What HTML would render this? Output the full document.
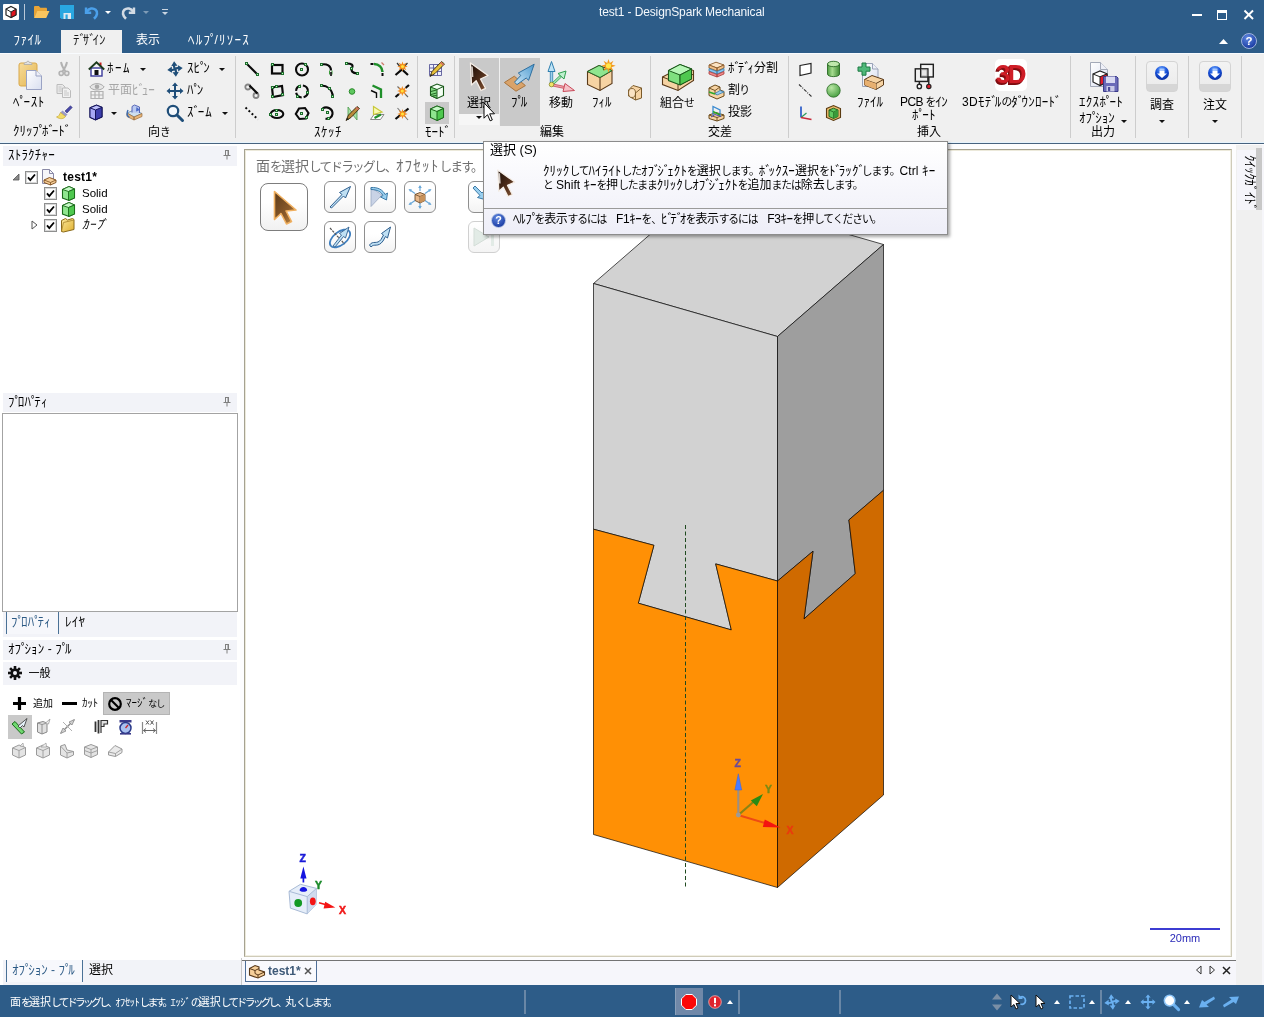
<!DOCTYPE html>
<html lang="ja">
<head>
<meta charset="utf-8">
<title>test1 - DesignSpark Mechanical</title>
<style>
*{box-sizing:border-box;margin:0;padding:0}
html,body{width:1264px;height:1017px;overflow:hidden;background:#fff}
body{position:relative;font-family:"Liberation Sans","Noto Sans CJK JP",sans-serif;font-size:12px;color:#000;line-height:1}
.t{position:absolute;white-space:nowrap;font-size:12px;line-height:14px;height:14px}
svg{position:absolute;overflow:visible}
.bx{position:absolute}
.k{font-size:1.083em;line-height:0}
.k i{font-style:normal;margin-right:-.25em}
.h{font-size:.9em;letter-spacing:-.1em;line-height:0}
.hint .k{letter-spacing:1.200px}
.hint .h{letter-spacing:-.135em}
.sb .h{font-size:.98em;letter-spacing:-2.700px}
.sb .k{font-size:.95em;letter-spacing:-.4px}
/* title */
#title{position:absolute;left:0;top:0;width:1264px;height:53px;background:#2d5c88}
#ttext{position:absolute;left:599px;top:4px;color:#f4f8fc;font-size:12px;letter-spacing:-.13px;line-height:16px;white-space:nowrap}
.tab{position:absolute;top:33px;color:#fff;font-size:12px;line-height:14px;white-space:nowrap}
#tabact{position:absolute;left:61px;top:30px;width:61px;height:24px;background:#f0f0f0}
/* ribbon */
#ribbon{position:absolute;left:0;top:53px;width:1264px;height:90px;background:#f0f0f0;border-top:1px solid #f8fbfe}
#ribline{position:absolute;left:0;top:142px;width:1264px;height:2px;background:linear-gradient(#e6f3fc 0,#e6f3fc 50%,#47637f 50%,#47637f 100%)}
.gsep{position:absolute;top:56px;width:1px;height:82px;background:#cdcdcd}
.dis{color:#a6a6a6}
.dd{position:absolute;width:0;height:0;border-left:3px solid transparent;border-right:3px solid transparent;border-top:3px solid #111}
.du{position:absolute;width:0;height:0;border-left:3.500px solid transparent;border-right:3.500px solid transparent;border-bottom:4px solid #fff}
/* panels */
.phead{position:absolute;left:3px;width:234px;height:20px;background:#f2f3f8}
/* status */
#status{position:absolute;left:0;top:985px;width:1264px;height:32px;background:#2d5c88}
.ssep{position:absolute;top:990px;width:2px;height:24px;background:#6987a6}
</style>
</head>
<body>
<div id="app" style="position:absolute;left:0;top:0;width:1264px;height:1017px;will-change:transform">
<!-- ===== title bar ===== -->
<div id="title"></div>
<div id="ttext">test1 - DesignSpark Mechanical</div>
<!-- app icon -->
<svg style="left:3px;top:4px" width="16" height="16" viewBox="0 0 16 16"><rect width="16" height="16" rx="1" fill="#fff"/><path d="M8 2.5 13 5v6L8 13.5 3 11V5z" fill="#fff" stroke="#222" stroke-width="1.2"/><path d="M8 8 13 5v6L8 13.5z" fill="#e0141e" stroke="#222" stroke-width="1"/><path d="M3 5l5 3" stroke="#222" stroke-width="1" fill="none"/></svg>
<div class="bx" style="left:24px;top:4px;width:1px;height:16px;background:#b9c8d8"></div>
<!-- open -->
<svg style="left:33px;top:5px" width="17" height="14" viewBox="0 0 17 14"><path d="M1 13V2.2C1 1.5 1.5 1 2.2 1h3.6l1.6 1.8h5.4c.7 0 1.2.5 1.2 1.2V6H4.6L1 13z" fill="#e8a436"/><path d="M1 13 4.2 6h12.3l-3.3 7z" fill="#fbc55e"/></svg>
<!-- save -->
<svg style="left:60px;top:5px" width="14" height="14" viewBox="0 0 14 14"><path d="M0 0h14v14H1.5L0 12.5z" fill="#29a7e1"/><rect x="3.5" y="8" width="7.5" height="6" fill="#dfe8f0"/><rect x="5.5" y="9.5" width="2.2" height="4.5" fill="#29a7e1"/></svg>
<!-- undo -->
<svg style="left:84px;top:5px" width="16" height="15" viewBox="0 0 16 15"><path d="M2 2.5v5.2h5.2" fill="none" stroke="#4ba0ea" stroke-width="2.4"/><path d="M2.6 7C5 3 9 2.6 11.6 4.8 14 7 13.4 10.600 10 13.800" fill="none" stroke="#4ba0ea" stroke-width="2.6"/></svg>
<div class="du" style="left:105px;top:11px;border-bottom:none;border-top:3px solid #fff"></div>
<!-- redo -->
<svg style="left:120px;top:5px" width="16" height="15" viewBox="0 0 16 15"><path d="M14 2.5v5.200H8.800" fill="none" stroke="#d3dbe4" stroke-width="2.4"/><path d="M13.400 7C11 3 7 2.600 4.400 4.800 2 7 2.600 10.600 6 13.800" fill="none" stroke="#d3dbe4" stroke-width="2.6"/></svg>
<div class="du" style="left:143px;top:11px;border-bottom:none;border-top:3px solid #7f9bb6"></div>
<!-- customize -->
<div class="bx" style="left:162px;top:9px;width:6px;height:1px;background:#c9d5e1"></div>
<div class="du" style="left:162px;top:12px;border-bottom:none;border-top:3px solid #c9d5e1"></div>
<!-- window controls -->
<div class="bx" style="left:1192px;top:13.700px;width:9.500px;height:2.500px;background:#fff"></div>
<div class="bx" style="left:1217px;top:10px;width:10.300px;height:10px;border:1px solid #fff;border-top:3px solid #fff"></div>
<svg style="left:1243.700px;top:10px" width="9.500" height="9.500" viewBox="0 0 10 10"><path d="M.5.500l9 9M9.500.5l-9 9" stroke="#fff" stroke-width="2"/></svg>
<!-- tabs -->
<div id="tabact"></div>
<div class="tab" style="left:13.500px;letter-spacing:.5px" aria-label="ﾌｧｲﾙ"><span class="k">ﾌｧｲﾙ</span></div>
<div class="tab" style="left:73px;color:#1a1a1a" aria-label="ﾃﾞｻﾞｲﾝ"><span class="k">ﾃ<i>ﾞ</i>ｻ<i>ﾞ</i>ｲﾝ</span></div>
<div class="tab" style="left:136px">表示</div>
<div class="tab" style="left:188px;letter-spacing:1.250px" aria-label="ﾍﾙﾌﾟ/ﾘｿｰｽ"><span class="k">ﾍﾙﾌ<i>ﾟ</i></span>/<span class="k">ﾘｿｰｽ</span></div>
<svg style="left:1219px;top:39px" width="9" height="5" viewBox="0 0 9 5"><path d="M0 5 4.500 0 9 5z" fill="#fff"/></svg>
<svg style="left:1241px;top:33.300px" width="16" height="16" viewBox="0 0 16 16"><defs><radialGradient id="hg" cx=".4" cy=".3" r=".8"><stop offset="0" stop-color="#5f88e0"/><stop offset="1" stop-color="#10309a"/></radialGradient></defs><circle cx="8" cy="8" r="7.500" fill="url(#hg)" stroke="#9fb4dc" stroke-width="1"/><text x="8" y="12.200" font-size="11.500" font-weight="bold" text-anchor="middle" fill="#fff" font-family="Liberation Sans, sans-serif">?</text></svg>
<!-- ===== ribbon ===== -->
<div id="ribbon"></div>
<div id="ribline"></div>
<div class="gsep" style="left:79px"></div>
<div class="gsep" style="left:235px"></div>
<div class="gsep" style="left:417px"></div>
<div class="gsep" style="left:454px"></div>
<div class="gsep" style="left:650px"></div>
<div class="gsep" style="left:788px"></div>
<div class="gsep" style="left:1070px"></div>
<div class="gsep" style="left:1135px"></div>
<div class="gsep" style="left:1188px"></div>
<div class="gsep" style="left:1241px"></div>
<!-- group labels -->
<div class="t" style="left:13px;top:124px;letter-spacing:-.05px" aria-label="ｸﾘｯﾌﾟﾎﾞｰﾄﾞ"><span class="k">ｸﾘｯﾌ<i>ﾟ</i>ﾎ<i>ﾞ</i>ｰﾄ<i>ﾞ</i></span></div>
<div class="t" style="left:148px;top:125px" aria-label="向き">向<span class="h">き</span></div>
<div class="t" style="left:314px;top:125px;letter-spacing:.5px" aria-label="ｽｹｯﾁ"><span class="k">ｽｹｯﾁ</span></div>
<div class="t" style="left:425px;top:125px" aria-label="ﾓｰﾄﾞ"><span class="k">ﾓｰﾄ<i>ﾞ</i></span></div>
<div class="t" style="left:540px;top:125px">編集</div>
<div class="t" style="left:708px;top:125px">交差</div>
<div class="t" style="left:917px;top:125px">挿入</div>
<div class="t" style="left:1091px;top:125px">出力</div>
<!-- clipboard -->
<div class="t" style="left:13px;top:95px;letter-spacing:.7px" aria-label="ﾍﾟｰｽﾄ"><span class="k">ﾍ<i>ﾟ</i>ｰｽﾄ</span></div>
<!-- orientation -->
<div class="t" style="left:107px;top:61px;letter-spacing:1.500px" aria-label="ﾎｰﾑ"><span class="k">ﾎｰﾑ</span></div><div class="dd" style="left:140px;top:68px"></div>
<div class="t dis" style="left:108px;top:83px" aria-label="平面ﾋﾞｭｰ">平面<span class="k">ﾋ<i>ﾞ</i>ｭｰ</span></div>
<div class="dd" style="left:111px;top:112px"></div>
<div class="t" style="left:187px;top:61px" aria-label="ｽﾋﾟﾝ"><span class="k">ｽﾋ<i>ﾟ</i>ﾝ</span></div><div class="dd" style="left:219px;top:68px"></div>
<div class="t" style="left:187px;top:83px" aria-label="ﾊﾟﾝ"><span class="k">ﾊ<i>ﾟ</i>ﾝ</span></div>
<div class="t" style="left:187px;top:105px;letter-spacing:1px" aria-label="ｽﾞｰﾑ"><span class="k">ｽ<i>ﾞ</i>ｰﾑ</span></div><div class="dd" style="left:222px;top:112px"></div>
<!-- mode highlight -->
<div class="bx" style="left:425px;top:102px;width:24px;height:22px;background:#c9c9c9"></div>
<!-- edit -->
<div class="bx" style="left:459px;top:58px;width:40px;height:56px;background:#c9c9c9"></div>
<div class="bx" style="left:459px;top:114px;width:40px;height:11px;background:#f6f6f6"></div>
<div class="dd" style="left:475.500px;top:116px"></div>
<div class="bx" style="left:500px;top:58px;width:40px;height:68px;background:#c9c9c9"></div>
<div class="t" style="left:467px;top:95.500px">選択</div>
<div class="t" style="left:511px;top:95px" aria-label="ﾌﾟﾙ"><span class="k">ﾌ<i>ﾟ</i>ﾙ</span></div>
<div class="t" style="left:549px;top:95.500px">移動</div>
<div class="t" style="left:592px;top:95px" aria-label="ﾌｨﾙ"><span class="k">ﾌｨﾙ</span></div>
<!-- intersect -->
<div class="t" style="left:660px;top:95.500px" aria-label="組合せ">組合<span class="h">せ</span></div>
<div class="t" style="left:728px;top:61px" aria-label="ﾎﾞﾃﾞｨ分割"><span class="k">ﾎ<i>ﾞ</i>ﾃ<i>ﾞ</i>ｨ</span>分割</div>
<div class="t" style="left:728px;top:83px;letter-spacing:-.8px" aria-label="割り">割<span class="h">り</span></div>
<div class="t" style="left:728px;top:105px">投影</div>
<!-- insert -->
<div class="t" style="left:857px;top:95px" aria-label="ﾌｧｲﾙ"><span class="k">ﾌｧｲﾙ</span></div>
<div class="t" style="left:900px;top:95px;letter-spacing:-.6px" aria-label="PCB をｲﾝ">PCB <span class="h">を</span><span class="k">ｲﾝ</span></div>
<div class="t" style="left:912px;top:108px;letter-spacing:.4px" aria-label="ﾎﾟｰﾄ"><span class="k">ﾎ<i>ﾟ</i>ｰﾄ</span></div>
<div class="t" style="left:962px;top:95px;letter-spacing:.3px" aria-label="3Dﾓﾃﾞﾙのﾀﾞｳﾝﾛｰﾄﾞ">3D<span class="k">ﾓﾃ<i>ﾞ</i>ﾙ</span><span class="h">の</span><span class="k">ﾀ<i>ﾞ</i>ｳﾝﾛｰﾄ<i>ﾞ</i></span></div>
<!-- output -->
<div class="t" style="left:1079px;top:95px;letter-spacing:.3px" aria-label="ｴｸｽﾎﾟｰﾄ"><span class="k">ｴｸｽﾎ<i>ﾟ</i>ｰﾄ</span></div>
<div class="t" style="left:1079px;top:111px" aria-label="ｵﾌﾟｼｮﾝ"><span class="k">ｵﾌ<i>ﾟ</i>ｼｮﾝ</span></div><div class="dd" style="left:1121px;top:120px"></div>
<div class="t" style="left:1150px;top:98px">調査</div><div class="dd" style="left:1159px;top:120px"></div>
<div class="t" style="left:1203px;top:98px">注文</div><div class="dd" style="left:1212px;top:120px"></div>
<!-- ===== ribbon icons A: clipboard, orientation ===== -->
<svg width="0" height="0" style="left:0;top:0"><defs>
<linearGradient id="gTan" x1="0" y1="0" x2="1" y2="1"><stop offset="0" stop-color="#f7dc9a"/><stop offset="1" stop-color="#e3b552"/></linearGradient>
<linearGradient id="gPage" x1="0" y1="0" x2="1" y2="1"><stop offset="0" stop-color="#ffffff"/><stop offset="1" stop-color="#d9dff0"/></linearGradient>
<linearGradient id="gGreen" x1="0" y1="0" x2="1" y2="1"><stop offset="0" stop-color="#b6f0b0"/><stop offset="1" stop-color="#4fc24f"/></linearGradient>
<radialGradient id="gSph" cx=".35" cy=".3" r=".8"><stop offset="0" stop-color="#b9e6a4"/><stop offset="1" stop-color="#3f9a3a"/></radialGradient>
<radialGradient id="gBall" cx=".45" cy=".25" r=".8"><stop offset="0" stop-color="#6aa5ff"/><stop offset=".5" stop-color="#1650d8"/><stop offset="1" stop-color="#0a2a9a"/></radialGradient>
<linearGradient id="gArrow" x1="0" y1="0" x2="1" y2="1"><stop offset="0" stop-color="#1a0d06"/><stop offset=".5" stop-color="#4a2a18"/><stop offset="1" stop-color="#8a5a3a"/></linearGradient>
<linearGradient id="gBlueArr" x1="0" y1="1" x2="1" y2="0"><stop offset="0" stop-color="#c9e6f7"/><stop offset="1" stop-color="#4f9bd0"/></linearGradient>
</defs></svg>
<!-- paste -->
<svg style="left:18px;top:59px" width="26" height="32" viewBox="0 0 26 32"><rect x="1" y="4" width="18" height="23" rx="2" fill="url(#gTan)" stroke="#d9a84a" stroke-width="1"/><path d="M6 5.500c0-1.500 1-2 2-2h.5c0-1.800 3-1.800 3 0h.5c1 0 2 .500 2 2z" fill="#e0e0e0" stroke="#a9a9a9" stroke-width=".8"/><path d="M8.500 11.500h9.500l5.500 5.500V30.500H8.500z" fill="url(#gPage)" stroke="#9aa3c4" stroke-width="1"/><path d="M18 11.500V17h5.500" fill="#eef0f8" stroke="#9aa3c4" stroke-width="1"/></svg>
<!-- cut (disabled) -->
<svg style="left:58px;top:61px" width="12" height="16" viewBox="0 0 12 16"><path d="M3 1C3.500 4 5 7 7.500 10.500M9 1C8.500 4 7 7 4.500 10.500" stroke="#b2b2b2" stroke-width="1.900" fill="none"/><circle cx="3.200" cy="12.300" r="2.100" fill="#e6e6e6" stroke="#b2b2b2" stroke-width="1.500"/><circle cx="8.800" cy="12.300" r="2.100" fill="#e6e6e6" stroke="#b2b2b2" stroke-width="1.500"/></svg>
<!-- copy (disabled) -->
<svg style="left:56px;top:84px" width="16" height="14" viewBox="0 0 16 14"><path d="M1 .500h5.500L9 3V9.500H1z" fill="#e9e9e9" stroke="#bcbcbc"/><path d="M2.500 3h3M2.500 5h4M2.500 7h4" stroke="#c6c6c6"/><path d="M6.500 4h5.500L14.500 6.500V13.500H6.500z" fill="#f1f1f1" stroke="#bcbcbc"/><path d="M8 7h3M8 9h5M8 11h5" stroke="#c6c6c6"/></svg>
<!-- format painter -->
<svg style="left:56px;top:105px" width="17" height="15" viewBox="0 0 17 15"><path d="M9 6 14.500.800 16.200 2.500 11 8z" fill="#4a4aa8" stroke="#33337a" stroke-width=".6"/><path d="M6.500 5.500 11.500 9.500 9 12 4 8z" fill="#9a9ac8"/><path d="M4.500 7.500 9.500 11.500C8 14 4 14.500.500 12 3 11.500 3.500 9.500 4.500 7.500z" fill="#f2dc6a" stroke="#c9a93a" stroke-width=".7"/></svg>
<!-- home -->
<svg style="left:88px;top:61px" width="17" height="16" viewBox="0 0 17 16"><rect x="11.500" y="1.500" width="2" height="4" fill="#c81e1e"/><rect x="3" y="7" width="11" height="8" fill="#fff" stroke="#3a3a9a" stroke-width="1.400"/><path d="M.800 8.500 8.500 1.200 16.200 8.500" fill="none" stroke="#1c3a1c" stroke-width="1.900"/><rect x="6.500" y="9" width="4" height="5" fill="#111"/></svg>
<!-- plan view (disabled) -->
<svg style="left:89px;top:82px" width="16" height="17" viewBox="0 0 16 17"><path d="M.800 5C4 .500 12 .5 15.200 5 12 9 4 9 .800 5z" fill="#e6e6e6" stroke="#a9a9a9"/><circle cx="8" cy="4.800" r="2.300" fill="#a9a9a9"/><path d="M2 9.500h12v7H2zM2 13h12M6 9.500v7M10 9.500v7" fill="none" stroke="#b2b2b2" stroke-width="1.200"/></svg>
<!-- view cube -->
<svg style="left:89px;top:104px" width="14" height="17" viewBox="0 0 14 17"><path d="M1 3.800 7.500 1.200 13 3.300V13L6.500 15.800 1 13.300z" fill="#8688e4" stroke="#14145a" stroke-width="1.100"/><path d="M1 3.800 6.500 6V15.800L1 13.300z" fill="#a6a8f4"/><path d="M6.500 6 13 3.300V13L6.500 15.800z" fill="#3c3eac"/><path d="M1 3.800 7.500 1.200 13 3.300 6.500 6z" fill="#bcbefa"/><path d="M1 3.800 7.500 1.200 13 3.300V13L6.500 15.800 1 13.300zM1 3.800 6.500 6 13 3.300M6.500 6V15.800" fill="none" stroke="#14145a" stroke-width="1"/></svg>
<!-- snap view -->
<svg style="left:125px;top:104px" width="18" height="17" viewBox="0 0 18 17"><path d="M2 9 9 6l8 3.500-8 3.500z" fill="#cfe0ee" stroke="#6a8aa8" stroke-width=".8"/><path d="M2 9v3.500L9 16v-3zM9 13v3l8-3.500V9.500z" fill="#e9b77a" stroke="#9a6a3a" stroke-width=".7"/><path d="M7 8.500V2.500L9.500 1l5 2V9" fill="#b9c9f0" stroke="#4a5ab0" stroke-width=".9"/><path d="M3 6C1.500 9 2 12 4.500 13.500" fill="none" stroke="#3a6ab0" stroke-width="1.400"/><path d="M11.500 3 15 6 11 7.500z" fill="#4a6ac8"/></svg>
<!-- spin -->
<svg style="left:167px;top:61px" width="16" height="16" viewBox="0 0 16 16"><path d="M3.500 8.800C6 10.500 10 5.800 12.500 7.200M7.200 3.500C5.500 6 10.500 10 8.800 12.500" fill="none" stroke="#1f4e79" stroke-width="2.300"/><path d="M.300 8.900 4.800 5.500 5 11.700zM15.700 7.100 11.200 10.500 11 4.300zM7.100.300 10.500 4.800 4.300 5zM8.900 15.700 5.500 11.200 11.700 11z" fill="#1f4e79"/></svg>
<!-- pan -->
<svg style="left:166px;top:82px" width="18" height="18" viewBox="0 0 18 18"><path d="M9 .500 12 4h-2v4h4V6l3.500 3L14 12v-2h-4v4h2l-3 3.500L6 14h2v-4H4v2L.500 9 4 6v2h4V4H6z" fill="#1f4e79"/></svg>
<!-- zoom -->
<svg style="left:166px;top:104px" width="18" height="18" viewBox="0 0 18 18"><circle cx="7" cy="7" r="5.200" fill="#f4f8fc" stroke="#1f4e79" stroke-width="2.200"/><path d="M11 11 16.500 16.500" stroke="#1f4e79" stroke-width="3" stroke-linecap="round"/></svg>
<!-- ===== ribbon icons B: sketch ===== -->
<svg style="left:244px;top:61px" width="16" height="17" viewBox="0 0 16 17"><path d="M2.500 2.500 13.500 13.500" stroke="#0a0a0a" fill="none" stroke-width="2"/><rect x="1" y="1" width="3" height="3" fill="#1c6e2c"/><rect x="2" y="2" width="1" height="1" fill="#c4f2c4"/><rect x="12" y="12" width="3" height="3" fill="#1c6e2c"/><rect x="13" y="13" width="1" height="1" fill="#c4f2c4"/></svg>
<svg style="left:269px;top:61px" width="16" height="17" viewBox="0 0 16 17"><rect x="3" y="4" width="10.500" height="8.500" stroke="#0a0a0a" fill="none" stroke-width="2.200"/><rect x="2" y="2" width="3" height="3" fill="#1c6e2c"/><rect x="3" y="3" width="1" height="1" fill="#c4f2c4"/><rect x="12" y="11" width="3" height="3" fill="#1c6e2c"/><rect x="13" y="12" width="1" height="1" fill="#c4f2c4"/></svg>
<svg style="left:294px;top:61px" width="16" height="17" viewBox="0 0 16 17"><circle cx="8" cy="8.500" r="6" stroke="#0a0a0a" fill="none" stroke-width="2.100"/><rect x="6" y="7" width="3" height="3" fill="#1c6e2c"/><rect x="7" y="8" width="1" height="1" fill="#c4f2c4"/><rect x="10" y="2" width="3" height="3" fill="#1c6e2c"/><rect x="11" y="3" width="1" height="1" fill="#c4f2c4"/></svg>
<svg style="left:319px;top:61px" width="16" height="17" viewBox="0 0 16 17"><path d="M2.500 3.500C8 2.500 12 5 12 9.500" stroke="#0a0a0a" fill="none" stroke-width="2.100"/><path d="M10.500 9.500v4M13 9.500v4" stroke="#3a9a3a" stroke-width="1" fill="none"/><path d="M12 11v4" stroke="#0a0a0a" fill="none" stroke-width="1.600"/><rect x="1" y="2" width="3" height="3" fill="#1c6e2c"/><rect x="2" y="3" width="1" height="1" fill="#c4f2c4"/></svg>
<svg style="left:344px;top:61px" width="16" height="17" viewBox="0 0 16 17"><path d="M2.500 2.500C8 2.500 9.500 4 8 7 6.500 10.500 9 12 13 12.500" stroke="#0a0a0a" fill="none" stroke-width="2.100"/><rect x="1" y="1" width="3" height="3" fill="#1c6e2c"/><rect x="2" y="2" width="1" height="1" fill="#c4f2c4"/><rect x="6" y="6" width="3" height="3" fill="#1c6e2c"/><rect x="7" y="7" width="1" height="1" fill="#c4f2c4"/><rect x="12" y="11" width="3" height="3" fill="#1c6e2c"/><rect x="13" y="12" width="1" height="1" fill="#c4f2c4"/></svg>
<svg style="left:369px;top:61px" width="16" height="17" viewBox="0 0 16 17"><path d="M1.500 3h3" stroke="#0a0a0a" fill="none" stroke-width="2"/><path d="M5 3c5 0 8.500 3.500 8.500 8" stroke="#1f8f2a" stroke-width="2.500" fill="none"/><path d="M13.500 12v3" stroke="#0a0a0a" fill="none" stroke-width="2"/><path d="M12.500 1.500l2.500 2.500" stroke="#d0786a" stroke-width="1.300"/></svg>
<svg style="left:394px;top:61px" width="16" height="17" viewBox="0 0 16 17"><path d="M1.500 14 8 8.500l6 5.500" stroke="#0a0a0a" fill="none" stroke-width="2.200"/><path d="M3 2l5 6L13.500 2" stroke="#333" stroke-width="1.200" fill="none"/><path d="M8.5 0.5l1 2.800 2.800-1.600-1.400 2.800 2.800 1-2.800 1 1.400 2.800-2.800-1.600-1 2.800-1-2.800-2.800 1.600 1.400-2.800-2.800-1 2.800-1-1.400-2.800 2.800 1.600z" fill="#f28a1e"/><circle cx="8.5" cy="5.5" r="1.600" fill="#ffe23a"/></svg>
<svg style="left:244px;top:83px" width="16" height="17" viewBox="0 0 16 17"><circle cx="3.800" cy="4" r="2.500" fill="none" stroke="#858585" stroke-width="1.800"/><circle cx="12" cy="12.500" r="2.500" fill="none" stroke="#858585" stroke-width="1.800"/><path d="M5.500 2.500 13.500 10.500" stroke="#0a0a0a" fill="none" stroke-width="2.200"/></svg>
<svg style="left:269px;top:83px" width="16" height="17" viewBox="0 0 16 17"><path d="M3 4.500 13 3l1 9L4 14z" stroke="#0a0a0a" fill="none" stroke-width="2.200"/><rect x="2" y="3" width="3" height="3" fill="#1c6e2c"/><rect x="3" y="4" width="1" height="1" fill="#c4f2c4"/><rect x="6" y="2" width="3" height="3" fill="#1c6e2c"/><rect x="7" y="3" width="1" height="1" fill="#c4f2c4"/><rect x="12" y="10" width="3" height="3" fill="#1c6e2c"/><rect x="13" y="11" width="1" height="1" fill="#c4f2c4"/><rect x="2" y="12" width="3" height="3" fill="#1c6e2c"/><rect x="3" y="13" width="1" height="1" fill="#c4f2c4"/></svg>
<svg style="left:294px;top:83px" width="16" height="17" viewBox="0 0 16 17"><circle cx="8" cy="8.500" r="6" stroke="#0a0a0a" fill="none" stroke-width="2.100" stroke-dasharray="7.500 2"/><rect x="4" y="2" width="3" height="3" fill="#1c6e2c"/><rect x="5" y="3" width="1" height="1" fill="#c4f2c4"/><rect x="12" y="8" width="3" height="3" fill="#1c6e2c"/><rect x="13" y="9" width="1" height="1" fill="#c4f2c4"/><rect x="2" y="12" width="3" height="3" fill="#1c6e2c"/><rect x="3" y="13" width="1" height="1" fill="#c4f2c4"/></svg>
<svg style="left:319px;top:83px" width="16" height="17" viewBox="0 0 16 17"><path d="M2.500 2.500C8 2.500 13 6 14 13.500" stroke="#0a0a0a" fill="none" stroke-width="2.100"/><rect x="1" y="1" width="3" height="3" fill="#1c6e2c"/><rect x="2" y="2" width="1" height="1" fill="#c4f2c4"/><rect x="9" y="4" width="3" height="3" fill="#1c6e2c"/><rect x="10" y="5" width="1" height="1" fill="#c4f2c4"/><rect x="12" y="12" width="3" height="3" fill="#1c6e2c"/><rect x="13" y="13" width="1" height="1" fill="#c4f2c4"/></svg>
<svg style="left:344px;top:83px" width="16" height="17" viewBox="0 0 16 17"><circle cx="8" cy="8.500" r="2.800" fill="#5fc85f" stroke="#2a8a2a" stroke-width="1"/></svg>
<svg style="left:369px;top:83px" width="16" height="17" viewBox="0 0 16 17"><path d="M3.500 2.500 12 6.500V15" stroke="#1f8f2a" stroke-width="2.300" fill="none"/><path d="M2 7.500 7.500 10v5" stroke="#0a0a0a" fill="none" stroke-width="1.400"/></svg>
<svg style="left:394px;top:83px" width="16" height="17" viewBox="0 0 16 17"><path d="M1.500 14 5 11M11.500 5 15 2" stroke="#0a0a0a" fill="none" stroke-width="2.200"/><path d="M3.500 3.500 6 6M11 11l3 3" stroke="#666" stroke-width="1.100"/><path d="M8.3 3l1 2.800 2.800-1.600-1.400 2.800 2.800 1-2.800 1 1.400 2.800-2.800-1.600-1 2.800-1-2.800-2.800 1.600 1.400-2.800-2.800-1 2.800-1-1.400-2.800 2.800 1.600z" fill="#f28a1e"/><circle cx="8.3" cy="8" r="1.600" fill="#ffe23a"/></svg>
<svg style="left:244px;top:105px" width="16" height="17" viewBox="0 0 16 17"><path d="M1.500 2.500 14 14.500" stroke="#0a0a0a" fill="none" stroke-width="2" stroke-dasharray="2 2.300"/></svg>
<svg style="left:269px;top:105px" width="16" height="17" viewBox="0 0 16 17"><ellipse cx="8" cy="9" rx="6.300" ry="4" stroke="#0a0a0a" fill="none" stroke-width="2.100"/><rect x="6" y="8" width="3" height="3" fill="#1c6e2c"/><rect x="7" y="9" width="1" height="1" fill="#c4f2c4"/><rect x="6" y="4" width="3" height="3" fill="#1c6e2c"/><rect x="7" y="5" width="1" height="1" fill="#c4f2c4"/><rect x="0" y="8" width="3" height="3" fill="#1c6e2c"/><rect x="1" y="9" width="1" height="1" fill="#c4f2c4"/></svg>
<svg style="left:294px;top:105px" width="16" height="17" viewBox="0 0 16 17"><path d="M5 3.500 11 3l3.500 5-2.500 5.500-6.500.500L1.800 9z" stroke="#0a0a0a" fill="none" stroke-width="2.100"/><rect x="6" y="7" width="3" height="3" fill="#1c6e2c"/><rect x="7" y="8" width="1" height="1" fill="#c4f2c4"/><rect x="11" y="11" width="3" height="3" fill="#1c6e2c"/><rect x="12" y="12" width="1" height="1" fill="#c4f2c4"/></svg>
<svg style="left:319px;top:105px" width="16" height="17" viewBox="0 0 16 17"><path d="M3.500 3.500C8 .500 14 4 13.500 9 13 13 9 14.500 6.500 13.500" stroke="#0a0a0a" fill="none" stroke-width="2.100"/><rect x="2" y="3" width="3" height="3" fill="#1c6e2c"/><rect x="3" y="4" width="1" height="1" fill="#c4f2c4"/><rect x="7" y="6" width="3" height="3" fill="#1c6e2c"/><rect x="8" y="7" width="1" height="1" fill="#c4f2c4"/><rect x="8" y="12" width="3" height="3" fill="#1c6e2c"/><rect x="9" y="13" width="1" height="1" fill="#c4f2c4"/></svg>
<svg style="left:344px;top:105px" width="16" height="17" viewBox="0 0 16 17"><path d="M4 2 8.500 8 13 2V15L8.500 9.500 4 15z" fill="#a6e0a6" stroke="#4a9a4a" stroke-width=".8"/><path d="M2 15.500 4.500 10 13 1.500 15.500 3.500 7 12.500z" fill="#b98a3a" stroke="#3a2a10" stroke-width=".9"/><path d="M2 15.500 3.200 12.800 4.800 14.300z" fill="#222"/><path d="M12 2.500 14.500 4.500" stroke="#d86a6a" stroke-width="1.500"/></svg>
<svg style="left:369px;top:105px" width="16" height="17" viewBox="0 0 16 17"><path d="M1.500 14.500 5 9.500h10l-3.500 5z" fill="#fff" stroke="#7a7a7a" stroke-width=".9"/><path d="M4.500 1.500 13 7 4.500 9.500z" fill="#fafab0" stroke="#c8c83a" stroke-width="1.200"/><path d="M5.500 13 12 9.500" stroke="#1f8f2a" stroke-width="2.200"/></svg>
<svg style="left:394px;top:105px" width="16" height="17" viewBox="0 0 16 17"><path d="M1.500 14 14.500 3.500" stroke="#0a0a0a" fill="none" stroke-width="2.200"/><path d="M3.500 3l10.500 12" stroke="#777" stroke-width="1.100"/><path d="M8.5 4l1 2.800 2.800-1.600-1.400 2.800 2.800 1-2.800 1 1.400 2.800-2.800-1.600-1 2.800-1-2.800-2.800 1.600 1.400-2.800-2.800-1 2.800-1-1.400-2.800 2.800 1.600z" fill="#f28a1e"/><circle cx="8.5" cy="9" r="1.600" fill="#ffe23a"/></svg>
<!-- ===== ribbon icons C: mode ===== -->
<svg style="left:428px;top:60px" width="18" height="18" viewBox="0 0 18 18"><path d="M1.500 4.500h12v11h-12zM1.500 8h12M1.500 11.500h12M5.500 4.500v11M9.500 4.500v11" fill="#eef0fa" stroke="#5a5a9a" stroke-width=".9"/><path d="M2 16.500 4 11.500 13.500 1.500 16.500 4 7 13.500z" fill="#e8c23a" stroke="#3a2a10" stroke-width=".9"/><path d="M2 16.500 3 14 4.500 15.300z" fill="#222"/><path d="M12.500 2.500 15.500 5" stroke="#d86a6a" stroke-width="1.600"/></svg>
<svg style="left:429px;top:82px" width="16" height="18" viewBox="0 0 16 18"><path d="M1.500 5 8 2l6.500 2.500v9L8 16.500 1.500 13.500z" fill="#f4fff4" stroke="#1a5a1a" stroke-width="1.100"/><path d="M1.500 5 8 7.500V16.500L1.500 13.500z" fill="#7fd87f" stroke="#1a5a1a" stroke-width="1"/><path d="M2 9.500 7.500 8M2 12.500 7.500 11M3.500 14 7.500 13.500" stroke="#1a5a1a" stroke-width=".9"/><path d="M8 7.500 14.500 4.500" stroke="#1a5a1a" stroke-width="1" fill="none"/></svg>
<svg style="left:429px;top:104px" width="16" height="18" viewBox="0 0 16 18"><path d="M1.500 5 8 2l6.500 2.500v9L8 16.500 1.500 13.500z" fill="#8fe68f" stroke="#1a6a1a" stroke-width="1.100"/><path d="M1.500 5 8 7.500 14.500 4.500 8 2z" fill="#c6f8c6" stroke="#1a6a1a" stroke-width="1"/><path d="M8 7.500V16.500L14.500 13.500V4.500z" fill="#4fc84f" stroke="#1a6a1a" stroke-width="1"/></svg>
<!-- ===== ribbon icons D: edit ===== -->
<!-- select arrow -->
<svg style="left:469px;top:61px" width="24" height="32" viewBox="0 0 24 32"><path d="M1.500 2 2.500 24 7.200 19.800 12 29.500 16.500 27.300 11.500 18 19 14.500z" fill="url(#gArrow)" stroke="#f6efe8" stroke-width="1.300" stroke-linejoin="round"/><path d="M3 5.500 3.600 16" stroke="#f4eee8" stroke-width="1.600" opacity=".85"/></svg>
<!-- pull -->
<svg style="left:503px;top:61px" width="34" height="32" viewBox="0 0 34 32"><path d="M1.400 21.500 11.300 15.200 22.400 24.600 13 30.200z" fill="#d9a36a" stroke="#a8743e" stroke-width="1"/><path d="M11.500 21.200 17.800 14.400 15.300 12 31.200 3.200 25.600 19.300 23.200 17 14 23.600z" fill="url(#gBlueArr)" stroke="#2f6f9f" stroke-width="1" stroke-linejoin="round"/></svg>
<!-- move -->
<svg style="left:546px;top:60px" width="30" height="34" viewBox="0 0 30 34"><path d="M4.300 24V11h2.400V24z" fill="#9fd0ec" stroke="#2f7faf" stroke-width=".8"/><path d="M5.500 1.500 9 11.500H2z" fill="#bfe3f6" stroke="#2f7faf" stroke-width="1"/><path d="M6 23 14 15.500 15.500 17 7.500 24.500z" fill="#9fe0b0" stroke="#2f9f4f" stroke-width=".8"/><path d="M20 11 18 19 12 13.500z" fill="#bff0cf" stroke="#2f9f4f" stroke-width="1"/><path d="M7 24 19 26.500 18.500 28.500 6.500 26z" fill="#f0a0a8" stroke="#c84a5a" stroke-width=".8"/><path d="M28.500 30.500 17 31.500 19 23.500z" fill="#f6c0c6" stroke="#c84a5a" stroke-width="1"/><circle cx="5.500" cy="24.500" r="2.300" fill="#f2e66a" stroke="#8a8a2a" stroke-width=".8"/></svg>
<!-- fill -->
<svg style="left:586px;top:58px" width="32" height="36" viewBox="0 0 32 36"><path d="M1.500 13.500 13 7.500 26 12.500V25.500L14 32.500 1.500 26.500z" fill="#f6d3a3" stroke="#5a3a1a" stroke-width="1.100"/><path d="M1.500 13.500 14 19.500V32.500M14 19.500 26 12.500" fill="none" stroke="#5a3a1a" stroke-width="1.100"/><path d="M1.500 13.500 13 7.500 17 9 17.500 12 21 10.500 26 12.500 14 19.500z" fill="#8fe68f" stroke="#2a6a2a" stroke-width="1"/><path d="M22.500 1l1.300 4 3.700-2.200-2 3.800 4.200 1.200-4.200 1.400 2 3.800-3.700-2.200-1.300 4-1.300-4-3.700 2.200 2-3.800-4.200-1.400 4.200-1.200-2-3.800 3.700 2.200z" fill="#f29a1e"/><circle cx="22.500" cy="7.800" r="2.600" fill="#ffe84a"/></svg>
<!-- small blend icon -->
<svg style="left:627px;top:84px" width="16" height="17" viewBox="0 0 16 17"><path d="M6 1.500 14.500 4V14L8.500 16 1.500 12V6z" fill="#f6d3a3" stroke="#7a5a2a" stroke-width="1"/><ellipse cx="5" cy="9" rx="3.500" ry="4.500" fill="#fbe3c3" stroke="#7a5a2a" stroke-width=".9"/><path d="M8.500 9 14.500 4M8.500 9v7" stroke="#7a5a2a" stroke-width=".9" fill="none"/></svg>
<!-- ===== intersect ===== -->
<!-- combine -->
<svg style="left:661px;top:62px" width="34" height="30" viewBox="0 0 34 30"><path d="M1.500 15 9 11l7 2.500V10l9-4.500 7.500 3v10L17 28.500 1.500 22.500z" fill="#f6d3a3" stroke="#5a3a1a" stroke-width="1.100"/><path d="M1.500 15 17 21v7.500M17 21 32.500 12" fill="none" stroke="#5a3a1a" stroke-width="1"/><path d="M7.500 8.500 19 2.500 30.500 7V17L19 23 7.500 18.500z" fill="#7fe07f" stroke="#1a5a1a" stroke-width="1.100"/><path d="M7.500 8.500 19 13 30.500 7 19 2.500z" fill="#b6f6b6" stroke="#1a5a1a" stroke-width="1"/><path d="M19 13V23" stroke="#1a5a1a" stroke-width="1"/><path d="M19 13 30.500 7V17L19 23z" fill="#4fc84f" stroke="#1a5a1a" stroke-width="1"/></svg>
<!-- split body -->
<svg style="left:708px;top:61px" width="17" height="17" viewBox="0 0 17 17"><path d="M1 4 8 1.200 16 4 9 7z" fill="#fbe3c3" stroke="#8a5a2a" stroke-width=".9"/><path d="M1 4v3l8 3V7zM9 7v3l7-3V4z" fill="#f0c08a" stroke="#8a5a2a" stroke-width=".9"/><path d="M1 7.500v2.500l8 3v-2.500zM9 10.500V13l7-3V7.500z" fill="#8ac8f0" stroke="#3a7aa8" stroke-width=".8"/><path d="M1 10.500V13l8 3v-2.500zM9 13.500V16l7-3v-2.500z" fill="#f08a8a" stroke="#a83a3a" stroke-width=".8"/></svg>
<!-- split -->
<svg style="left:708px;top:83px" width="17" height="17" viewBox="0 0 17 17"><path d="M1 5 7 2l5 2v3l4 1.500V13l-7 3-8-3.500z" fill="#f6d3a3" stroke="#6a4a1a" stroke-width="1"/><path d="M1 5 7 7.500 12 4M7 7.500v3l2 1" fill="none" stroke="#6a4a1a" stroke-width=".9"/><path d="M7 10.500 12 7.500 16 9 9 12z" fill="#9ad0f6" stroke="#3a7aa8" stroke-width=".8"/><path d="M1 9 7 11" stroke="#2aa82a" stroke-width="1.600"/></svg>
<!-- project -->
<svg style="left:708px;top:105px" width="17" height="17" viewBox="0 0 17 17"><path d="M1 10 8 7.500 16 10v3.500L9 16 1 13.500z" fill="#f6d3a3" stroke="#6a4a1a" stroke-width="1"/><path d="M1 10 9 12.500 16 10M9 12.500V16" fill="none" stroke="#6a4a1a" stroke-width=".9"/><path d="M5 10V1.500L12 5v6" fill="none" stroke="#3a8ad0" stroke-width="1.300"/><path d="M5 6.500 12 10" stroke="#2aa82a" stroke-width="1.500"/><path d="M3 12 7 9.500l6 2" fill="none" stroke="#4a4ab8" stroke-width="1"/></svg>
<!-- ===== insert small ===== -->
<svg style="left:798px;top:62px" width="15" height="15" viewBox="0 0 15 15"><path d="M2 3.500 13 1.500V11L2 13.500z" fill="#fff" stroke="#222" stroke-width="1.200"/></svg>
<svg style="left:826px;top:60px" width="15" height="18" viewBox="0 0 15 18"><defs><linearGradient id="gCyl" x1="0" y1="0" x2="1" y2="0"><stop offset="0" stop-color="#4a9a3f"/><stop offset=".4" stop-color="#a6dc8f"/><stop offset="1" stop-color="#3f8a35"/></linearGradient></defs><path d="M1.500 4v10c0 3.500 12 3.500 12 0V4z" fill="url(#gCyl)" stroke="#2a6a25" stroke-width=".9"/><ellipse cx="7.500" cy="4" rx="6" ry="2.700" fill="#bfe8ac" stroke="#2a6a25" stroke-width=".9"/></svg>
<svg style="left:798px;top:83px" width="15" height="15" viewBox="0 0 15 15"><path d="M1 1.500 14 14" stroke="#333" stroke-width="1.100" stroke-dasharray="3.500 1.200 1 1.200"/></svg>
<svg style="left:826px;top:83px" width="15" height="15" viewBox="0 0 15 15"><circle cx="7.500" cy="7.500" r="6.700" fill="url(#gSph)" stroke="#2a6a25" stroke-width=".8"/></svg>
<svg style="left:798px;top:105px" width="15" height="16" viewBox="0 0 15 16"><path d="M3 1.500v11" stroke="#2a5ac8" stroke-width="1.700"/><path d="M3 12.500 8.500 8" stroke="#2a9a5a" stroke-width="1.200"/><path d="M3 12.500 13.500 14.500" stroke="#c82a3a" stroke-width="1.500"/></svg>
<svg style="left:825px;top:104px" width="17" height="18" viewBox="0 0 17 18"><path d="M1.500 4.500 8.500 1.500l7 3v9l-7 3-7-3z" fill="#e8b86a" stroke="#5a3a10" stroke-width="1.100"/><path d="M4 6 8.500 4.200 13 6v6.500L8.500 14.500 4 12.500z" fill="#5fc85f" stroke="#1a5a1a" stroke-width=".9"/><path d="M8.500 8v6.500M4 6l4.500 2L13 6" stroke="#1a5a1a" stroke-width=".8" fill="none"/><path d="M8.500 8 13 6v6.500L8.500 14.500z" fill="#3a9a3a"/></svg>
<!-- file -->
<svg style="left:857px;top:61px" width="28" height="30" viewBox="0 0 28 30"><path d="M5.500 2.500h10l5.500 5.500v17.500h-15.500z" fill="url(#gPage)" stroke="#9aa3b8" stroke-width="1"/><path d="M15.500 2.500V8H21" fill="#eef0f8" stroke="#9aa3b8" stroke-width="1"/><path d="M5 2h4v4h4v4.200H9v4H5v-4H1V6h4z" fill="#4fb87a" stroke="#1f7a45" stroke-width="1"/><path d="M7.500 18.500 15 14.500 26.500 18.500V24L19 28.500 7.500 24z" fill="#f6d3a3" stroke="#5a3a1a" stroke-width="1"/><path d="M7.500 18.500 19 22.500 26.500 18.500M19 22.500v6" fill="none" stroke="#5a3a1a" stroke-width="1"/><path d="M7.500 18.500 19 22.500V28.500L7.500 24z" fill="#e8b070"/></svg>
<!-- pcb -->
<svg style="left:913px;top:62.500px" width="23.500" height="27" viewBox="0 0 26 30"><rect x="8.500" y="1.500" width="14" height="14" fill="#f6f6f6" stroke="#222" stroke-width="1.600"/><rect x="2.500" y="6.500" width="14" height="14" fill="none" stroke="#222" stroke-width="1.600"/><rect x="9.500" y="7.500" width="6" height="7" fill="#e6e6e6" stroke="#8a8a8a" stroke-width=".8"/><path d="M7 20.500V25M17.500 15.500V25" stroke="#222" stroke-width="1.600"/><circle cx="7" cy="26" r="2.400" fill="#fff" stroke="#222" stroke-width="1.500"/><circle cx="17.500" cy="26" r="2.400" fill="#e01e2e" stroke="#222" stroke-width="1.300"/></svg>
<!-- 3D -->
<div class="bx" style="left:995px;top:59px;width:32px;height:32px;background:#fff;border-radius:5px"></div>
<div class="bx" style="left:995px;top:62px;width:30px;height:24px;font:bold 26px/24px 'Liberation Sans',sans-serif;color:#cf1d27;letter-spacing:-2.500px;text-align:center;white-space:nowrap;text-shadow:-1px 1px 0 #8a0e12,-1.500px 2px 0 #7a0a0e">3D</div>
<!-- ===== output ===== -->
<svg style="left:1088px;top:61px" width="31" height="31" viewBox="0 0 31 31"><path d="M2.500 1.500h10l7 7V25.500h-17z" fill="url(#gPage)" stroke="#a3a9b8" stroke-width="1"/><path d="M12.500 1.500V8.500h7" fill="#eef0f8" stroke="#a3a9b8" stroke-width="1"/><path d="M5 13 12 10l7 2.800v8L12 24.500 5 21z" fill="#fff" stroke="#222" stroke-width="1.200"/><path d="M12 15.800 19 12.800v8L12 24.500z" fill="#e01e2e" stroke="#222" stroke-width="1"/><path d="M5 13 12 15.800" stroke="#222" stroke-width="1"/><path d="M15.500 15.500h13l1.500 1.500V30.500h-14.500z" fill="#6a6ab8" stroke="#3a3a8a" stroke-width="1"/><rect x="18" y="15.500" width="9" height="6.500" fill="#d9daf2"/><rect x="18.500" y="25" width="8" height="5.500" fill="#c9cae8"/><rect x="20" y="26" width="2.200" height="4" fill="#4a4a9a"/></svg>
<!-- investigate / order buttons -->
<div class="bx" style="left:1146px;top:61px;width:32px;height:31px;border:1px solid #d4d4d4;border-radius:4px;background:linear-gradient(#f3f3f3 0,#ececec 76%,#d6d6d6 77%,#d6d6d6 100%)"></div>
<div class="bx" style="left:1199px;top:61px;width:32px;height:31px;border:1px solid #d4d4d4;border-radius:4px;background:linear-gradient(#f3f3f3 0,#ececec 76%,#d6d6d6 77%,#d6d6d6 100%)"></div>
<svg style="left:1154px;top:65px" width="16" height="16" viewBox="0 0 16 16"><circle cx="8" cy="8" r="7" fill="url(#gBall)"/><path d="M5.500 5.500h5v3H13L8 13 3 8.500h2.500z" fill="#fff"/><path d="M5.500 4.200h5" stroke="#cfe0ff" stroke-width="1"/></svg>
<svg style="left:1207px;top:65px" width="16" height="16" viewBox="0 0 16 16"><circle cx="8" cy="8" r="7" fill="url(#gBall)"/><path d="M5.500 5.500h5v3H13L8 13 3 8.500h2.500z" fill="#fff"/><path d="M5.500 4.200h5" stroke="#cfe0ff" stroke-width="1"/></svg>
<!-- ===== left panels ===== -->
<div class="bx" style="left:0;top:144px;width:1264px;height:841px;background:#fdfdfe"></div>
<div class="bx" style="left:0;top:144px;width:240px;height:841px;background:#fff"></div>
<!-- structure -->
<div class="phead" style="top:146px"></div>
<div class="t" style="left:8px;top:148px;letter-spacing:.2px" aria-label="ｽﾄﾗｸﾁｬｰ"><span class="k">ｽﾄﾗｸﾁｬｰ</span></div>
<svg style="left:223px;top:150px" width="8" height="10" viewBox="0 0 8 10"><path d="M2 .500h4M2.500.500V5M5.500.500V5M.500 5.500h7M4 5.500V9.500" stroke="#808080" stroke-width="1" fill="none"/><path d="M5 .500V5" stroke="#808080" stroke-width="1"/></svg>
<!-- tree row 1 -->
<svg style="left:12px;top:173px" width="8" height="8" viewBox="0 0 8 8"><path d="M7 1V7H1z" fill="#8a8a8a" stroke="#555" stroke-width=".8"/></svg>
<svg style="left:25px;top:171px" width="13" height="13" viewBox="0 0 13 13"><rect x=".500" y=".500" width="12" height="12" fill="#fff" stroke="#8e8f8f"/><rect x="1.500" y="1.500" width="10" height="10" fill="none" stroke="#d8d8d8"/><path d="M3 6.300 5.300 9 10 3.500" fill="none" stroke="#000" stroke-width="1.800"/></svg>
<svg style="left:41px;top:169px" width="16" height="17" viewBox="0 0 16 17"><path d="M1.500.500h7l4 4V14.500h-11z" fill="#f6f6fa" stroke="#8a8aa8" stroke-width="1"/><path d="M8.500.500V4.500h4" fill="none" stroke="#8a8aa8" stroke-width="1"/><path d="M3 11 8.500 8.500 15 11v2.500L9.500 16 3 13.500z" fill="#f6cf9a" stroke="#7a4a1a" stroke-width=".9"/><path d="M3 11 9.500 13.500 15 11M9.500 13.500V16" stroke="#7a4a1a" stroke-width=".8" fill="none"/></svg>
<div class="t" style="left:63px;top:170px;font-weight:bold;font-size:12px;letter-spacing:.25px">test1*</div>
<!-- tree row 2,3 -->
<svg style="left:44px;top:187px" width="13" height="13" viewBox="0 0 13 13"><rect x=".500" y=".500" width="12" height="12" fill="#fff" stroke="#8e8f8f"/><rect x="1.500" y="1.500" width="10" height="10" fill="none" stroke="#d8d8d8"/><path d="M3 6.300 5.300 9 10 3.500" fill="none" stroke="#000" stroke-width="1.800"/></svg>
<svg style="left:61px;top:185px" width="15" height="17" viewBox="0 0 15 17"><path d="M1.500 4.500 8 1.500l5.500 2.500v9L8 15.500 1.500 13z" fill="#8fe68f" stroke="#1a6a1a" stroke-width="1.100"/><path d="M1.500 4.500 7.500 6.500 13.500 4 8 1.500z" fill="#c6f8c6" stroke="#1a6a1a" stroke-width=".9"/><path d="M7.500 6.500V15.500L13.500 13V4z" fill="#4fc84f" stroke="#1a6a1a" stroke-width=".9"/></svg>
<div class="t" style="left:82px;top:186px;font-size:11.500px">Solid</div>
<svg style="left:44px;top:203px" width="13" height="13" viewBox="0 0 13 13"><rect x=".500" y=".500" width="12" height="12" fill="#fff" stroke="#8e8f8f"/><rect x="1.500" y="1.500" width="10" height="10" fill="none" stroke="#d8d8d8"/><path d="M3 6.300 5.300 9 10 3.500" fill="none" stroke="#000" stroke-width="1.800"/></svg>
<svg style="left:61px;top:201px" width="15" height="17" viewBox="0 0 15 17"><path d="M1.500 4.500 8 1.500l5.500 2.500v9L8 15.500 1.500 13z" fill="#8fe68f" stroke="#1a6a1a" stroke-width="1.100"/><path d="M1.500 4.500 7.500 6.500 13.500 4 8 1.500z" fill="#c6f8c6" stroke="#1a6a1a" stroke-width=".9"/><path d="M7.500 6.500V15.500L13.500 13V4z" fill="#4fc84f" stroke="#1a6a1a" stroke-width=".9"/></svg>
<div class="t" style="left:82px;top:202px;font-size:11.500px">Solid</div>
<!-- tree row 4 -->
<svg style="left:31px;top:220px" width="7" height="10" viewBox="0 0 7 10"><path d="M1 1 6 5 1 9z" fill="#fff" stroke="#555" stroke-width="1"/></svg>
<svg style="left:44px;top:219px" width="13" height="13" viewBox="0 0 13 13"><rect x=".500" y=".500" width="12" height="12" fill="#fff" stroke="#8e8f8f"/><rect x="1.500" y="1.500" width="10" height="10" fill="none" stroke="#d8d8d8"/><path d="M3 6.300 5.300 9 10 3.500" fill="none" stroke="#000" stroke-width="1.800"/></svg>
<svg style="left:60px;top:217px" width="16" height="16" viewBox="0 0 16 16"><defs><linearGradient id="gFold" x1="0" y1="0" x2="1" y2="1"><stop offset="0" stop-color="#fbe89a"/><stop offset="1" stop-color="#e0b030"/></linearGradient></defs><path d="M1.500 14.500V3.500L5.500 1.500l2 1.500 5-1.500 1.500 1V12.500L3.500 15z" fill="url(#gFold)" stroke="#8a6a1a" stroke-width="1"/><path d="M1.500 14.500 3.500 5.500 14 3" fill="none" stroke="#a8842a" stroke-width=".8"/></svg>
<div class="t" style="left:82px;top:218px;font-style:italic;letter-spacing:.6px" aria-label="ｶｰﾌﾞ"><span class="k">ｶｰﾌ<i>ﾞ</i></span></div>
<!-- properties -->
<div class="phead" style="top:393px;height:19px"></div>
<div class="t" style="left:8px;top:395px;letter-spacing:.1px" aria-label="ﾌﾟﾛﾊﾟﾃｨ"><span class="k">ﾌ<i>ﾟ</i>ﾛﾊ<i>ﾟ</i>ﾃｨ</span></div>
<svg style="left:223px;top:397px" width="8" height="10" viewBox="0 0 8 10"><path d="M2 .500h4M2.500.500V5M5.500.500V5M.500 5.500h7M4 5.500V9.500" stroke="#808080" stroke-width="1" fill="none"/><path d="M5 .500V5" stroke="#808080" stroke-width="1"/></svg>
<div class="bx" style="left:2px;top:413px;width:236px;height:199px;background:#fff;border:1px solid #a3a3a3"></div>
<div class="bx" style="left:3px;top:612px;width:234px;height:25px;background:#f2f3f8"></div>
<div class="bx" style="left:6px;top:612px;width:53px;height:22px;background:#f6f7fb;border-left:1px solid #4a7196;border-right:1px solid #4a7196"></div>
<div class="t" style="left:11px;top:615px;color:#2c5a85;letter-spacing:.2px" aria-label="ﾌﾟﾛﾊﾟﾃｨ"><span class="k">ﾌ<i>ﾟ</i>ﾛﾊ<i>ﾟ</i>ﾃｨ</span></div>
<div class="t" style="left:65px;top:615px;letter-spacing:.3px" aria-label="ﾚｲﾔ"><span class="k">ﾚｲﾔ</span></div>
<!-- options -->
<div class="phead" style="top:640px;height:19.500px"></div>
<div class="t" style="left:8px;top:642px;letter-spacing:.1px" aria-label="ｵﾌﾟｼｮﾝ - ﾌﾟﾙ"><span class="k">ｵﾌ<i>ﾟ</i>ｼｮﾝ</span> - <span class="k">ﾌ<i>ﾟ</i>ﾙ</span></div>
<svg style="left:223px;top:644px" width="8" height="10" viewBox="0 0 8 10"><path d="M2 .500h4M2.500.500V5M5.500.500V5M.500 5.500h7M4 5.500V9.500" stroke="#808080" stroke-width="1" fill="none"/><path d="M5 .500V5" stroke="#808080" stroke-width="1"/></svg>
<div class="bx" style="left:3px;top:661.500px;width:234px;height:23.500px;background:#f2f3f8"></div>
<svg style="left:8px;top:666px" width="14" height="14" viewBox="0 0 14 14"><g fill="#111"><circle cx="7" cy="7" r="4.600"/><rect x="5.700" y="0" width="2.600" height="14"/><rect x="0" y="5.700" width="14" height="2.600"/><rect x="5.700" y="0" width="2.600" height="14" transform="rotate(45 7 7)"/><rect x="5.700" y="0" width="2.600" height="14" transform="rotate(-45 7 7)"/></g><circle cx="7" cy="7" r="2" fill="#f2f3f8"/></svg>
<div class="t" style="left:28.500px;top:666px;font-size:11px">一般</div>
<!-- add / cut / no merge -->
<svg style="left:12px;top:696px" width="15" height="15" viewBox="0 0 15 15"><path d="M7.500 1V14M1 7.500H14" stroke="#000" stroke-width="3.200"/></svg>
<div class="t" style="left:33px;top:697px;font-size:10px">追加</div>
<div class="bx" style="left:62px;top:702px;width:15px;height:3px;background:#000"></div>
<div class="t" style="left:82px;top:697px;font-size:10px" aria-label="ｶｯﾄ"><span class="k">ｶｯﾄ</span></div>
<div class="bx" style="left:103px;top:691.500px;width:67px;height:23px;background:#c9c9c9;border:1px solid #b4b4b4"></div>
<svg style="left:107px;top:696px" width="16" height="16" viewBox="0 0 16 16"><circle cx="8" cy="8" r="5.800" fill="none" stroke="#000" stroke-width="2.200"/><path d="M4 4 12 12" stroke="#000" stroke-width="2.200"/></svg>
<div class="t" style="left:126px;top:697px;font-size:10px;letter-spacing:.1px" aria-label="ﾏｰｼﾞ なし"><span class="k">ﾏｰｼ<i>ﾞ</i></span> <span class="h">なし</span></div>
<!-- option icons row 2 -->
<div class="bx" style="left:8px;top:715px;width:23.500px;height:23.500px;background:#c9c9c9"></div>
<svg style="left:10px;top:716.500px" width="19" height="19" viewBox="0 0 19 19"><path d="M2 7 5 4.500 14.500 15 11.500 17z" fill="#6fd86f" stroke="#1a6a1a" stroke-width="1"/><path d="M8 9 17 1.500 14 10 12.500 8.500 10 11z" fill="#e6f2fa" stroke="#444" stroke-width=".9"/></svg>
<svg style="left:35px;top:717.500px" width="17" height="17" viewBox="0 0 17 17"><path d="M2.500 5 8 3.500 12 5v9L7 16 2.500 14z" fill="#e0e0e0" stroke="#8a8a8a" stroke-width="1"/><path d="M2.500 5 7 6.500 12 5M7 6.500V16" stroke="#8a8a8a" stroke-width=".9" fill="none"/><path d="M10 5.500 15 1 13.500 6z" fill="#f4f4f4" stroke="#9a9a9a" stroke-width=".8"/></svg>
<svg style="left:59px;top:717.500px" width="17" height="17" viewBox="0 0 17 17"><path d="M2 15 15 2" stroke="#8a8a8a" stroke-width="1.400"/><path d="M15.500 1.500 10 4 13 7zM1.500 15.500 7 13 4 10z" fill="#d0d0d0" stroke="#8a8a8a" stroke-width=".8"/><path d="M4 4l9 9" stroke="#b0b0b0" stroke-width="1"/></svg>
<svg style="left:93px;top:717.500px" width="17" height="17" viewBox="0 0 17 17"><path d="M2.500 3.500V14M5.500 2V15.500" stroke="#333" stroke-width="1.800"/><path d="M8 2.500h6.500V6h-3.500V8.500H8zM8 2.500V15" fill="#e0e0e0" stroke="#333" stroke-width="1.200"/></svg>
<svg style="left:117px;top:717.500px" width="17" height="17" viewBox="0 0 17 17"><rect x="2.500" y="2" width="12" height="2.500" fill="#3a3a8a"/><circle cx="8.500" cy="10" r="5.500" fill="#a8c0f0" stroke="#2a3a8a" stroke-width="1.500"/><path d="M8.500 10 11 7" stroke="#c82a2a" stroke-width="1.300"/><rect x="3" y="15" width="11" height="1.600" fill="#3a3a8a"/></svg>
<svg style="left:141px;top:717.500px" width="17" height="17" viewBox="0 0 17 17"><path d="M1.500 4V16M15.500 4V16" stroke="#8a8a8a" stroke-width="1.200"/><path d="M2.500 12.500H14.500M2.500 12.500 5 10.500M2.500 12.500 5 14.500M14.500 12.500 12 10.500M14.500 12.500 12 14.500" stroke="#666" stroke-width="1" fill="none"/><path d="M5 2.500l3 4M8 2.500l-3 4M9.500 2.500l3 4M12.500 2.500l-3 4" stroke="#555" stroke-width="1"/></svg>
<!-- option icons row 3 (disabled) -->
<svg style="left:11px;top:742px" width="17" height="17" viewBox="0 0 17 17"><path d="M1.500 6 8 3l6.500 2.500V13L8 16 1.500 13z" fill="#e4e4e4" stroke="#9a9a9a" stroke-width="1"/><path d="M1.500 6 8 8.500 14.500 5.500M8 8.500V16" stroke="#9a9a9a" stroke-width=".9" fill="none"/><path d="M9 4l3-3 .5 3.500z" fill="#f0f0f0" stroke="#9a9a9a" stroke-width=".7"/></svg>
<svg style="left:35px;top:742px" width="17" height="17" viewBox="0 0 17 17"><path d="M1.500 6 8 3l6.500 2.500V13L8 16 1.500 13z" fill="#e4e4e4" stroke="#9a9a9a" stroke-width="1"/><path d="M1.500 6 8 8.500 14.500 5.500M8 8.500V16" stroke="#9a9a9a" stroke-width=".9" fill="none"/><path d="M6 5l5-4 .5 4z" fill="#f0f0f0" stroke="#9a9a9a" stroke-width=".7"/></svg>
<svg style="left:59px;top:742px" width="17" height="17" viewBox="0 0 17 17"><path d="M1.500 4 6 2.500 8 8l6.500 1.500V13L8 16 1.500 13z" fill="#e4e4e4" stroke="#9a9a9a" stroke-width="1"/><path d="M1.500 4 8 11 14.500 9.500M8 11v5" stroke="#9a9a9a" stroke-width=".9" fill="none"/></svg>
<svg style="left:83px;top:742px" width="17" height="17" viewBox="0 0 17 17"><path d="M1.500 5 8 2.500 14.500 5V12.500L8 15.500 1.500 12.500z" fill="#e4e4e4" stroke="#9a9a9a" stroke-width="1"/><path d="M1.500 5 8 7.500 14.500 5M1.500 8.500 8 11 14.500 8.500M8 7.500V15.500" stroke="#9a9a9a" stroke-width=".9" fill="none"/></svg>
<svg style="left:107px;top:742px" width="17" height="17" viewBox="0 0 17 17"><path d="M1.500 10 8 3.500 15 7v3.500L8.500 14.500 1.500 13z" fill="#eaeaea" stroke="#9a9a9a" stroke-width="1"/><path d="M1.500 10 8.500 11.500 15 7M8.500 11.500V14.500" stroke="#9a9a9a" stroke-width=".9" fill="none"/></svg>
<!-- bottom tabs -->
<div class="bx" style="left:3px;top:960px;width:238px;height:25px;background:#f2f3f8"></div>
<div class="bx" style="left:6px;top:960px;width:77px;height:21.500px;background:#f7f8fc;border-left:1px solid #4a7196;border-right:1px solid #4a7196"></div>
<div class="t" style="left:12px;top:963px;color:#2c5a85;letter-spacing:0" aria-label="ｵﾌﾟｼｮﾝ - ﾌﾟﾙ"><span class="k">ｵﾌ<i>ﾟ</i>ｼｮﾝ</span> - <span class="k">ﾌ<i>ﾟ</i>ﾙ</span></div>
<div class="t" style="left:89px;top:963px">選択</div>
<!-- ===== viewport ===== -->
<div class="bx" style="left:244px;top:149px;width:988px;height:808px;background:#fff;border:1px solid #a5a291;border-right-color:#cfcbb9;border-bottom-color:#cfcbb9;box-shadow:inset 1px 1px 0 #ece9da,inset -1px -1px 0 #f1efe4"></div>
<div class="t hint" style="left:256px;top:157px;font-size:14px;line-height:18px;height:18px;color:#707070" aria-label="面を選択してドラッグし、ｵﾌｾｯﾄします。">面<span class="h">を</span>選択<span class="h">してドラッグし、</span><span class="k">ｵﾌｾｯﾄ</span><span class="h">します。</span></div>
<!-- 3D scene -->
<svg style="left:246px;top:151px" width="984" height="804" viewBox="246 151 984 804">
<g stroke="#000" stroke-opacity=".68" stroke-width="1" stroke-linejoin="round">
<!-- top face -->
<path d="M593.500 283.500 699.500 191.500 883.500 244.500 777.500 336.500z" fill="#d2d2d2"/>
<!-- front face gray -->
<path d="M593.500 283.500 777.500 336.500V581L715.700 563.900 731.300 629.900 638.300 603.200 653.900 545.300 593.500 529.200z" fill="#d2d2d2"/>
<!-- right face gray -->
<path d="M777.500 336.500 883.500 244.500V490.300L848.900 519.900 855.300 573.600 804 618.900 813 551.200 777.500 581z" fill="#9e9e9e"/>
<!-- front face orange -->
<path d="M593.500 529.200 653.900 545.300 638.300 603.200 731.300 629.900 715.700 563.900 777.500 581V887.500L593.500 834.500z" fill="#ff9005"/>
<!-- right face orange -->
<path d="M777.500 581 813 551.200 804 618.900 855.300 573.600 848.900 519.900 883.500 490.300V795L777.500 887.500z" fill="#cf6a00"/>
</g>
<path d="M685.500 525V888" stroke="#1f4a1f" stroke-width="1" stroke-dasharray="4 2.500" fill="none"/>
<!-- origin triad -->
<path d="M738.300 814V789" stroke="#9a8f86" stroke-width="2.100"/>
<path d="M738.300 773.800 741.700 790h-6.800z" fill="#4a7cff" stroke="#3a62e0" stroke-width=".5"/>
<path d="M739.500 814 754.500 801" stroke="#8a8414" stroke-width="2.200"/>
<path d="M763 794 756.800 806.300 750.800 800.600z" fill="#2a8a14"/>
<path d="M740.500 815.800 765 823" stroke="#ee4a14" stroke-width="2"/>
<path d="M780.500 827.400 762.800 827 764.800 819.500z" fill="#f41410"/>
<circle cx="738.300" cy="815" r="2.400" fill="#a09a94"/>
<text x="734.600" y="767" font-size="10.500" font-weight="bold" fill="#6a4a9a" stroke="#6a4a9a" stroke-width=".4" font-family="Liberation Sans, sans-serif">Z</text>
<text x="765" y="792.500" font-size="10.500" font-weight="bold" fill="#7a8a14" stroke="#7a8a14" stroke-width=".4" font-family="Liberation Sans, sans-serif">Y</text>
<text x="786.500" y="833.600" font-size="10.500" font-weight="bold" fill="#ea3a0e" stroke="#ea3a0e" stroke-width=".4" font-family="Liberation Sans, sans-serif">X</text>
<!-- corner triad -->
<path d="M289 891.300 300.500 884.300 316.500 888.400 316 904.500 307.200 913.900 290.400 908.100z" fill="#e6eef9" stroke="#a9bbd6" stroke-width="1"/>
<path d="M307.200 896.600 316.500 888.400 316 904.500 307.200 913.900z" fill="#cfdbee"/>
<path d="M289 891.300 307.200 896.600 316.500 888.400M307.200 896.600V913.900" fill="none" stroke="#a9bbd6" stroke-width="1"/>
<path d="M303.400 882.500V876" stroke="#1414e0" stroke-width="1.700"/>
<path d="M303.400 866.500 306.500 878.500h-6.200z" fill="#1414e0"/>
<path d="M299.600 890.500C299.600 885.800 307.200 885.800 307.200 890.500 306 892.300 300.800 892.300 299.600 890.500z" fill="#1414e0"/>
<circle cx="298.200" cy="903" r="3.900" fill="#149a24"/>
<ellipse cx="312.800" cy="901.300" rx="2.900" ry="3.900" fill="#f41414"/>
<path d="M319 902.800 328 905.200" stroke="#f41414" stroke-width="1.700"/>
<path d="M335.300 907.500 323.600 908.500 325.200 901.800z" fill="#f41414"/>
<text x="299.600" y="862" font-size="10.500" font-weight="bold" fill="#1a1ad8" stroke="#1a1ad8" stroke-width=".5" font-family="Liberation Sans, sans-serif">Z</text>
<text x="315" y="889" font-size="10.500" font-weight="bold" fill="#1a8a2a" stroke="#1a8a2a" stroke-width=".5" font-family="Liberation Sans, sans-serif">Y</text>
<text x="339" y="913.500" font-size="10.500" font-weight="bold" fill="#f01a1a" stroke="#f01a1a" stroke-width=".5" font-family="Liberation Sans, sans-serif">X</text>
<!-- scale bar -->
<path d="M1150 929H1220" stroke="#3c3cd2" stroke-width="2"/>
<text x="1185" y="942" font-size="11" text-anchor="middle" fill="#2a2ab8" font-family="Liberation Sans, sans-serif">20mm</text>
</svg>
<!-- tool guide buttons -->
<div class="bx" style="left:260px;top:183px;width:48px;height:48px;border:1px solid #7d7d7d;border-radius:8px;background:linear-gradient(#ffffff 40%,#f1f1f1)"></div>
<svg style="left:271px;top:189px" width="28" height="36" viewBox="0 0 28 36"><defs><linearGradient id="gBrown" x1="0" y1="0" x2="1" y2="1"><stop offset="0" stop-color="#5a3a1a"/><stop offset=".6" stop-color="#8a5a2a"/><stop offset="1" stop-color="#c8924a"/></linearGradient></defs><path d="M3.500 2.500 25 21 15 22 20.500 32.500 15.500 35 10 24.500 3.500 30.500z" fill="url(#gBrown)" stroke="#f0b060" stroke-width="1.600" stroke-linejoin="round"/></svg>
<div class="bx" style="left:324px;top:181px;width:32px;height:32px;border:1px solid #8f8f8f;border-radius:6px;background:linear-gradient(#ffffff 40%,#f3f3f3)"></div>
<div class="bx" style="left:364px;top:181px;width:32px;height:32px;border:1px solid #8f8f8f;border-radius:6px;background:linear-gradient(#ffffff 40%,#f3f3f3)"></div>
<div class="bx" style="left:404px;top:181px;width:32px;height:32px;border:1px solid #8f8f8f;border-radius:6px;background:linear-gradient(#ffffff 40%,#f3f3f3)"></div>
<div class="bx" style="left:324px;top:221px;width:32px;height:32px;border:1px solid #8f8f8f;border-radius:6px;background:linear-gradient(#ffffff 40%,#f3f3f3)"></div>
<div class="bx" style="left:364px;top:221px;width:32px;height:32px;border:1px solid #8f8f8f;border-radius:6px;background:linear-gradient(#ffffff 40%,#f3f3f3)"></div>
<div class="bx" style="left:468px;top:181px;width:32px;height:32px;border:1px solid #8f8f8f;border-radius:6px;background:linear-gradient(#ffffff 40%,#f3f3f3)"></div>
<div class="bx" style="left:468px;top:221px;width:32px;height:32px;border:1px solid #d0d0d0;border-radius:6px;background:linear-gradient(#ffffff,#f4f4f4)"></div>
<!-- guide icons -->
<svg style="left:328px;top:185px" width="24" height="24" viewBox="0 0 24 24"><path d="M2 22 14 9.500 11.500 7.500 22.500 1.500 17.500 13 15.500 11 3.500 23z" fill="#bfe0f4" stroke="#2f5f8f" stroke-width="1"/></svg>
<svg style="left:368px;top:185px" width="24" height="24" viewBox="0 0 24 24"><path d="M3 2.500V21.500L14 10z" fill="#c9d3e6" stroke="#9aa8c0" stroke-width=".8"/><path d="M3 2.500C10 2 15 5 17 9.500L19.500 8 18.500 15 12.500 12 15 10.500C13.500 7 9 4.500 3 4.500z" fill="#9ad0f0" stroke="#2f6f9f" stroke-width=".9"/></svg>
<svg style="left:408px;top:185px" width="24" height="24" viewBox="0 0 24 24"><g stroke="#6aa8d8" stroke-width="1.200"><path d="M12 1v5M12 18v5M2 5l5 3.500M22 5l-5 3.500M2 19l5-3.500M22 19l-5-3.500"/></g><g fill="#6aa8d8"><path d="M12 0l1.800 3h-3.600zM12 24l1.800-3h-3.600zM.500 4l3.500.5-1.800 2.600zM23.500 4l-3.500.5 1.800 2.600zM.500 20l3.500-.5-1.800-2.600zM23.500 20l-3.500-.5 1.800-2.600z"/></g><path d="M7 9.500 12 7.500l5 2v6L12 18l-5-2.500z" fill="#e8b88a" stroke="#6a4a2a" stroke-width=".9"/><path d="M7 9.500 12 11.500 17 9.500M12 11.500V18" stroke="#6a4a2a" stroke-width=".8" fill="none"/><path d="M12 11.500 17 9.500v6L12 18z" fill="#c8925a"/></svg>
<svg style="left:328px;top:225px" width="24" height="24" viewBox="0 0 24 24"><ellipse cx="12" cy="13.500" rx="11.800" ry="6.500" fill="none" stroke="#3f7fbf" stroke-width="1.800" transform="rotate(-38 12 13.500)"/><path d="M2 3 16.500 19" stroke="#555" stroke-width="1.200" stroke-dasharray="2.500 1"/><path d="M5 21 13.500 10 11.500 8.500 21 2 17.500 13 15.500 11.500 7 22z" fill="#bfe0f4" stroke="#2f5f8f" stroke-width=".9"/></svg>
<svg style="left:368px;top:225px" width="24" height="24" viewBox="0 0 24 24"><path d="M1.500 20C5 15 9 20 13 14.500L15.500 10 13.500 8.500 22.500 2 19.500 13 17.500 11.500 15 16C10 23 6 18 3 22z" fill="#bfe0f4" stroke="#2f5f8f" stroke-width="1"/></svg>
<svg style="left:472px;top:185px" width="24" height="24" viewBox="0 0 24 24"><path d="M1 3 3 1 10 8 12 6 14.500 15 5.500 12.500 8 10.500z" fill="#9ad0f0" stroke="#2f6f9f" stroke-width=".9"/></svg>
<svg style="left:472px;top:225px" width="24" height="24" viewBox="0 0 24 24"><path d="M2 3 17 12 2 21z" fill="#e2ebe6" stroke="#d3ddd7" stroke-width="1"/><rect x="19" y="3" width="3" height="18" fill="#e2ebe6"/></svg>
<!-- doc tabs -->
<div class="bx" style="left:241px;top:958px;width:995px;height:27px;background:#fcfcfe;border-left:1px solid #c9c9c9"></div>
<div class="bx" style="left:242px;top:960px;width:993.500px;height:25px;background:#f6f6fb;border-top:1px solid #737373"></div>
<div class="bx" style="left:245px;top:961px;width:72px;height:20.500px;background:#f9f9fd;border:1px solid #4f6f98;border-top:none"></div>
<svg style="left:248px;top:963px" width="18" height="16" viewBox="0 0 18 16"><path d="M1.500 5.500 7 2.500l4 1.500V7l5.500 2V12L10 15 1.500 12z" fill="#f6cf9a" stroke="#5a3a1a" stroke-width="1.100"/><path d="M1.500 5.500 7 7.500 11 5.500M7 7.500V10.500L10 12 16.500 9M10 12V15" fill="none" stroke="#5a3a1a" stroke-width="1"/></svg>
<div class="t" style="left:268px;top:964px;font-weight:bold;font-size:12px;color:#3f5a78">test1*</div>
<svg style="left:304px;top:967px" width="8" height="8" viewBox="0 0 8 8"><path d="M1 1 7 7M7 1 1 7" stroke="#555" stroke-width="1.500"/></svg>
<svg style="left:1195px;top:965px" width="8" height="10" viewBox="0 0 8 10"><path d="M6 1V9L1.500 5z" fill="none" stroke="#333" stroke-width="1"/></svg>
<svg style="left:1208px;top:965px" width="8" height="10" viewBox="0 0 8 10"><path d="M2 1V9L6.500 5z" fill="none" stroke="#333" stroke-width="1"/></svg>
<svg style="left:1222px;top:966px" width="9" height="9" viewBox="0 0 9 9"><path d="M1 1 8 8M8 1 1 8" stroke="#222" stroke-width="1.500"/></svg>
<!-- right quick guide -->
<div class="bx" style="left:1235.500px;top:145px;width:29px;height:840px;background:#f0f0f0"></div>
<div class="bx" style="left:1262px;top:145px;width:2px;height:840px;background:#f6f6fa"></div>
<div class="bx" style="left:1236.500px;top:149.500px;width:19.500px;height:60px;background:#f5f5fa"></div>
<div class="bx" style="left:1256px;top:148px;width:5.500px;height:61.500px;background:#c8c8c8"></div>
<div class="t" style="left:1242.500px;top:155px;writing-mode:vertical-rl;text-orientation:sideways;height:60px;width:14px;line-height:14px;letter-spacing:-.4px" aria-label="ｸｲｯｸｶﾞｲﾄﾞ"><span class="k">ｸｲｯｸｶ<i>ﾞ</i>ｲﾄ<i>ﾞ</i></span></div>
<!-- ===== status bar ===== -->
<div id="status"></div>
<div class="t sb" style="left:10px;top:995px;color:#fff;font-size:11px" aria-label="面を選択してドラッグし、ｵﾌｾｯﾄします。ｴｯｼﾞ の選択してドラッグし、丸くします。">面<span class="h">を</span>選択<span class="h">してドラッグし、</span><span class="k">ｵﾌｾｯﾄ</span><span class="h">します。</span><span class="k">ｴｯｼ<i>ﾞ</i></span> <span class="h">の</span>選択<span class="h">してドラッグし、</span>丸<span class="h">くします。</span></div>
<div class="ssep" style="left:524px"></div>
<div class="ssep" style="left:738px"></div>
<div class="ssep" style="left:839px"></div>
<div class="ssep" style="left:1100px"></div>
<div class="bx" style="left:675px;top:988px;width:28px;height:27px;background:#7088a8;border-left:1px solid #8aa0ba"></div>
<svg style="left:681px;top:994px" width="16" height="16" viewBox="0 0 16 16"><path d="M4.800.500h6.400L15.500 4.800v6.400L11.200 15.500H4.800L.500 11.200V4.800z" fill="#fc0808" stroke="#fff" stroke-width="1"/></svg>
<svg style="left:708px;top:995px" width="14" height="14" viewBox="0 0 14 14"><circle cx="7" cy="7" r="6.300" fill="#e0242e" stroke="#f6b0b0" stroke-width=".8"/><rect x="6" y="2.800" width="2" height="5.400" fill="#fff"/><rect x="6" y="9.300" width="2" height="2" fill="#fff"/></svg>
<div class="du" style="left:727px;top:1000px"></div>
<!-- right status icons -->
<svg style="left:992px;top:993px" width="10" height="18" viewBox="0 0 10 18"><path d="M5 .500 10 6.500H0zM5 17.500 10 11.500H0z" fill="#7a8fa6"/></svg>
<svg style="left:1009px;top:993px" width="18" height="18" viewBox="0 0 18 18"><path d="M2 2V14L5 11.500 7 16 9 15 7 10.500H11z" fill="#fff" stroke="#111" stroke-width="1"/><path d="M10.500 5C13 2.500 16.500 4 16.500 7.500 16.500 10.500 14 12 11.500 11" fill="none" stroke="#6ab0f0" stroke-width="1.800"/><path d="M9.500 1.500v4.500h4.500z" fill="#6ab0f0"/></svg>
<svg style="left:1034px;top:993px" width="14" height="18" viewBox="0 0 14 18"><path d="M2 2V14L5 11.500 7 16 9 15 7 10.500H11z" fill="#fff" stroke="#111" stroke-width="1"/></svg>
<div class="du" style="left:1054px;top:1000px"></div>
<svg style="left:1069px;top:995px" width="16" height="14" viewBox="0 0 16 14"><rect x="1" y="1" width="14" height="12" fill="none" stroke="#6ab0f0" stroke-width="1.700" stroke-dasharray="3.500 2"/></svg>
<div class="du" style="left:1089px;top:1000px"></div>
<svg style="left:1104px;top:994px" width="16" height="16" viewBox="0 0 16 16"><path d="M3.500 8.800C6 10.500 10 5.800 12.500 7.200M7.200 3.500C5.500 6 10.500 10 8.800 12.500" fill="none" stroke="#6ab0f0" stroke-width="1.900"/><path d="M.300 8.900 4.600 5.700 4.800 11.500zM15.700 7.100 11.400 10.300 11.200 4.500zM7.100.300 10.300 4.600 4.500 4.800zM8.900 15.700 5.700 11.400 11.500 11.200z" fill="#6ab0f0"/></svg>
<div class="du" style="left:1125px;top:1000px"></div>
<svg style="left:1140px;top:994px" width="16" height="16" viewBox="0 0 18 18"><path d="M9 .500 12 4h-2v4h4V6l3.500 3L14 12v-2h-4v4h2l-3 3.500L6 14h2v-4H4v2L.500 9 4 6v2h4V4H6z" fill="#6ab0f0"/></svg>
<svg style="left:1163px;top:994px" width="17" height="17" viewBox="0 0 18 18"><path d="M11 11 16.500 16.500" stroke="#6ab0f0" stroke-width="3.200" stroke-linecap="round"/><circle cx="7" cy="7" r="5.600" fill="#fff" stroke="#8cc4f6" stroke-width="1.600"/></svg>
<div class="du" style="left:1184px;top:1000px"></div>
<svg style="left:1198px;top:995px" width="18" height="14" viewBox="0 0 18 14"><path d="M1 12.500 4 5l2.500 2L16 1.500l1 2.500L8.500 9.500 11 12z" fill="#6ab0f0"/></svg>
<svg style="left:1222px;top:995px" width="18" height="14" viewBox="0 0 18 14"><path d="M17 1.500 14 9l-2.500-2L2 12.500 1 10 9.500 4.500 7 2z" fill="#6ab0f0"/></svg>
<!-- ===== tooltip ===== -->
<div class="bx" style="left:483px;top:141px;width:465px;height:94px;background:linear-gradient(#ffffff,#eeeef8);border:1px solid #8c8c8c;box-shadow:2px 2px 3px rgba(0,0,0,.35)"></div>
<div class="t" style="left:490px;top:142px;font-size:13px;line-height:16px;height:16px">選択 (S)</div>
<svg style="left:496px;top:168px" width="24" height="31" viewBox="0 0 24 32"><path d="M1.500 2 2.500 24 7.200 19.800 12 29.500 16.500 27.300 11.500 18 19 14.500z" fill="url(#gArrow)" stroke="#f6efe8" stroke-width="1.300" stroke-linejoin="round"/><path d="M3 5.500 3.600 16" stroke="#f4eee8" stroke-width="1.600" opacity=".85"/></svg>
<div class="t" style="left:543px;top:164px;letter-spacing:.1px" aria-label="ｸﾘｯｸしてﾊｲﾗｲﾄしたｵﾌﾞｼﾞｪｸﾄを選択します。ﾎﾞｯｸｽｰ選択をﾄﾞﾗｯｸﾞします。Ctrl ｷｰ"><span class="k">ｸﾘｯｸ</span><span class="h">して</span><span class="k">ﾊｲﾗｲﾄ</span><span class="h">した</span><span class="k">ｵﾌ<i>ﾞ</i>ｼ<i>ﾞ</i>ｪｸﾄ</span><span class="h">を</span>選択<span class="h">します。</span><span class="k">ﾎ<i>ﾞ</i>ｯｸｽｰ</span>選択<span class="h">を</span><span class="k">ﾄ<i>ﾞ</i>ﾗｯｸ<i>ﾞ</i></span><span class="h">します。</span>Ctrl <span class="k">ｷｰ</span></div>
<div class="t" style="left:543px;top:177.700px" aria-label="と Shift ｷｰを押したままｸﾘｯｸしｵﾌﾞｼﾞｪｸﾄを追加または除去します。"><span class="h">と</span> Shift <span class="k">ｷｰ</span><span class="h">を</span>押<span class="h">したまま</span><span class="k">ｸﾘｯｸ</span><span class="h">し</span><span class="k">ｵﾌ<i>ﾞ</i>ｼ<i>ﾞ</i>ｪｸﾄ</span><span class="h">を</span>追加<span class="h">または</span>除去<span class="h">します。</span></div>
<div class="bx" style="left:484px;top:208px;width:463px;height:1px;background:#9a9a9a"></div>
<svg style="left:490.500px;top:213px" width="15" height="15" viewBox="0 0 16 16"><circle cx="8" cy="8" r="7.500" fill="url(#hg)" stroke="#c7d3ea" stroke-width="1"/><text x="8" y="12.200" font-size="11.500" font-weight="bold" text-anchor="middle" fill="#fff" font-family="Liberation Sans, sans-serif">?</text></svg>
<div class="t" style="left:513px;top:212px;letter-spacing:-.4px" aria-label="ﾍﾙﾌﾟを表示するには　F1ｷｰを、ﾋﾞﾃﾞｵを表示するには　F3ｷｰを押してください。"><span class="k">ﾍﾙﾌ<i>ﾟ</i></span><span class="h">を</span>表示<span class="h">するには　</span>F1<span class="k">ｷｰ</span><span class="h">を、</span><span class="k">ﾋ<i>ﾞ</i>ﾃ<i>ﾞ</i>ｵ</span><span class="h">を</span>表示<span class="h">するには　</span>F3<span class="k">ｷｰ</span><span class="h">を</span>押<span class="h">してください。</span></div>
<!-- mouse cursor -->
<svg style="left:482.500px;top:101.700px" width="12.500" height="21" viewBox="0 0 14 24"><path d="M1 1V18.500L5 14.500 8 21.500 10.500 20.500 7.500 13.500H13z" fill="#fff" stroke="#000" stroke-width="1.100" stroke-linejoin="round"/></svg>
</div>
</body>
</html>
